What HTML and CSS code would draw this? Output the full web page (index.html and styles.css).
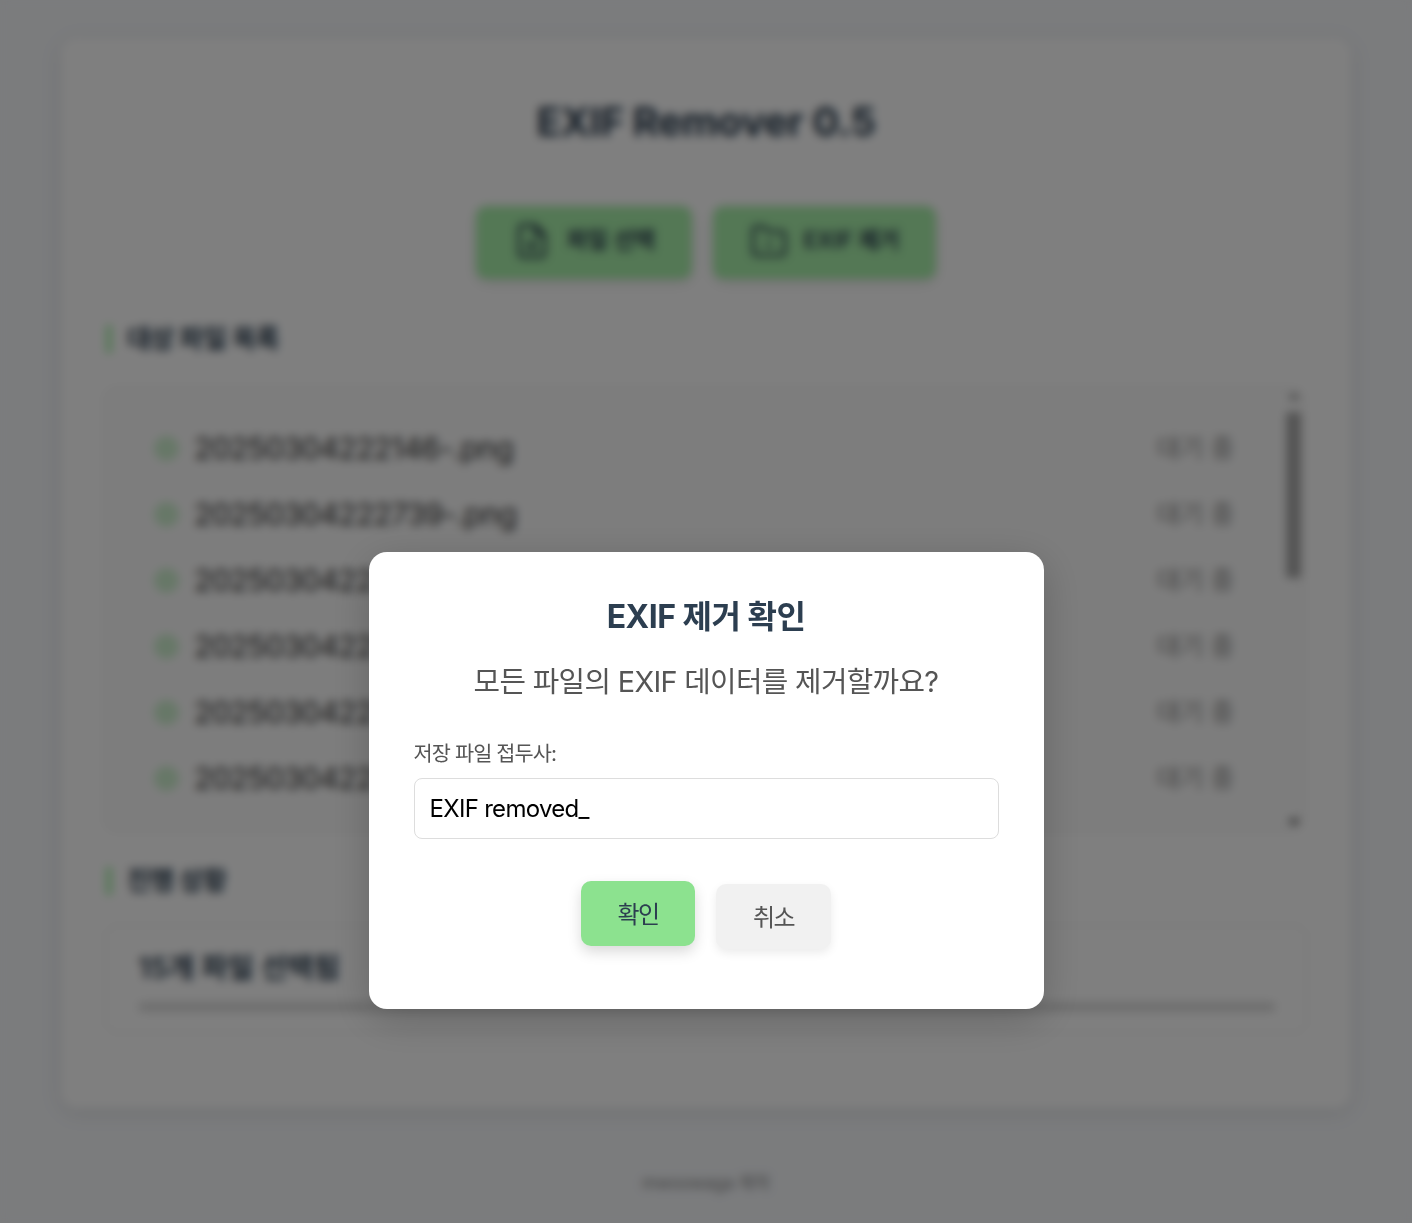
FILE: index.html
```html
<!DOCTYPE html>
<html lang="ko">
<head>
    <meta charset="UTF-8">
    <meta name="viewport" content="width=device-width, initial-scale=1.0">
    <title>EXIF Remover 0.5</title>
    <link rel="stylesheet" href="styles.css">
</head>
<body>
    <div class="container">
        <h1>EXIF Remover 0.5</h1>

        <div class="actions">
            <button class="btn-main btn-file">
                <svg class="btn-icon" viewBox="0 0 24 24" fill="none" stroke="currentColor" stroke-width="2" stroke-linecap="round" stroke-linejoin="round">
                    <path d="M14 2H6a2 2 0 0 0-2 2v16a2 2 0 0 0 2 2h12a2 2 0 0 0 2-2V8z"/>
                    <path d="M14 2v6h6"/>
                    <path d="M12 18v-6M9 15h6"/>
                </svg>
                <span class="btn-label">파일 선택</span>
            </button>
            <button class="btn-main btn-run">
                <svg class="btn-icon" viewBox="0 0 24 24" fill="none" stroke="currentColor" stroke-width="2" stroke-linecap="round" stroke-linejoin="round">
                    <path d="M22 19a2 2 0 0 1-2 2H4a2 2 0 0 1-2-2V5a2 2 0 0 1 2-2h5l2 3h9a2 2 0 0 1 2 2z"/>
                    <path d="M12 12v4M10 14h4" stroke-width="1.2"/>
                </svg>
                <span class="btn-label">EXIF 제거</span>
            </button>
        </div>

        <h2 class="section-title">대상 파일 목록</h2>
        <div class="file-box">
            <ul class="file-list">
                <li class="file-item"><span class="dot"></span><span class="file-name">20250304222146-.png</span><span class="file-state">대기 중</span></li>
                <li class="file-item"><span class="dot"></span><span class="file-name">20250304222739-.png</span><span class="file-state">대기 중</span></li>
                <li class="file-item"><span class="dot"></span><span class="file-name">20250304223012-.png</span><span class="file-state">대기 중</span></li>
                <li class="file-item"><span class="dot"></span><span class="file-name">20250304223145-.png</span><span class="file-state">대기 중</span></li>
                <li class="file-item"><span class="dot"></span><span class="file-name">20250304223308-.png</span><span class="file-state">대기 중</span></li>
                <li class="file-item"><span class="dot"></span><span class="file-name">20250304223420-.png</span><span class="file-state">대기 중</span></li>
            </ul>
            <div class="scroll-rail">
                <span class="arrow arrow-up"></span>
                <span class="thumb-track"><span class="thumb"></span></span>
                <span class="arrow arrow-down"></span>
            </div>
        </div>

        <h2 class="section-title section-progress">진행 상황</h2>
        <div class="progress-box">
            <div class="progress-text">15개 파일 선택됨</div>
            <div class="progress-bar"></div>
        </div>
    </div>

    <footer class="footer">mwoowaga 제작</footer>

    <div class="overlay">
        <div class="modal">
            <h3 class="modal-title">EXIF 제거 확인</h3>
            <p class="modal-text">모든 파일의 EXIF 데이터를 제거할까요?</p>
            <label class="modal-label" for="prefix">저장 파일 접두사:</label>
            <input class="modal-input" type="text" id="prefix" value="EXIF removed_">
            <div class="modal-buttons">
                <button class="btn-confirm">확인</button>
                <button class="btn-cancel">취소</button>
            </div>
        </div>
    </div>
</body>
</html>
```

FILE: styles.css
```css
* {
    box-sizing: border-box;
}
html, body {
    height: 1223px;
    overflow: hidden;
}
body {
    font-family: Inter, "Noto Sans CJK KR", sans-serif;
    margin: 0;
    padding: 38px 61px 0;
    background: #f6f8fb;
    color: #333;
}
.container {
    height: 1070px;
    padding: 59px 44px 0;
    background: #fff;
    border-radius: 16px;
    box-shadow: 0 4px 20px rgba(0, 0, 0, 0.1);
}
h1 {
    margin: 0;
    height: 50px;
    line-height: 50px;
    text-align: center;
    font-size: 40px;
    font-weight: 700;
    letter-spacing: -0.4px;
    color: #2c3e50;
}
.actions {
    display: flex;
    justify-content: center;
    gap: 21px;
    margin-top: 59px;
}
.btn-main {
    display: flex;
    align-items: center;
    justify-content: center;
    gap: 16px;
    height: 73px;
    border: none;
    border-radius: 10px;
    background: #a8f0aa;
    color: #2c3e50;
    font-family: inherit;
    font-size: 22.4px;
    font-weight: 600;
    box-shadow: 0 4px 12px rgba(0, 0, 0, 0.1);
}
.btn-label {
    margin-bottom: 10px;
}
.btn-file {
    width: 216px;
}
.btn-run {
    width: 223px;
}
.btn-icon {
    width: 38px;
    height: 38px;
    margin-bottom: 4px;
}
.section-title {
    margin: 46px 0 0 1px;
    height: 28px;
    line-height: 28px;
    padding-left: 15px;
    border-left: 6px solid #a8f0aa;
    font-size: 26px;
    font-weight: 600;
    letter-spacing: -0.6px;
    color: #2c3e50;
}
.file-box {
    display: flex;
    height: 443px;
    margin-top: 35px;
    margin-right: 3px;
    background: #fbfbfb;
    border: 1px solid #ddd;
    border-radius: 10px;
}
.file-list {
    flex: 1;
    margin: 0;
    padding: 26px 51px 0 48px;
    list-style: none;
    overflow: hidden;
}
.file-item {
    display: flex;
    align-items: center;
    height: 66px;
}
.dot {
    width: 25px;
    height: 25px;
    border-radius: 50%;
    background: #8ce28f;
    opacity: 0.4;
}
.file-name {
    flex: 1;
    margin-left: 15px;
    font-size: 30px;
    letter-spacing: -0.65px;
    color: #333;
}
.file-state {
    padding-bottom: 4px;
    font-size: 25.4px;
    color: #888;
}
.scroll-rail {
    display: flex;
    flex-direction: column;
    align-items: center;
    width: 17px;
    margin-right: 1px;
    padding: 4px 0;
}
.arrow {
    width: 0;
    height: 0;
    border-left: 6px solid transparent;
    border-right: 6px solid transparent;
}
.arrow-up {
    border-bottom: 6px solid #777;
}
.arrow-down {
    border-top: 7px solid #505050;
}
.thumb-track {
    flex: 1;
    width: 100%;
    padding: 13px 1px 0;
}
.thumb {
    display: block;
    width: 15px;
    height: 166px;
    margin: 0 auto;
    background: #a8a8a8;
    border-radius: 2px;
}
.section-progress {
    margin-top: 36px;
}
.progress-box {
    height: 108px;
    margin-top: 30px;
    padding: 19px 30px 0 32px;
    border: 1px solid #e4e4e4;
    border-radius: 10px;
}
.progress-text {
    font-size: 28.5px;
    font-weight: 600;
    color: #2c3e50;
}
.progress-bar {
    height: 10px;
    margin-top: 16px;
    background: #ddd;
    border-radius: 5px;
}
.footer {
    margin-top: 61px;
    text-align: center;
    font-size: 17px;
    color: #888;
}
.overlay {
    position: fixed;
    inset: 0;
    display: flex;
    align-items: flex-start;
    justify-content: center;
    padding-top: 552px;
    background: rgba(0, 0, 0, 0.5);
    backdrop-filter: blur(5px);
}
.modal {
    width: 675px;
    height: 457px;
    padding: 45px;
    background: #fff;
    border-radius: 18px;
    box-shadow: 0 10px 40px rgba(0, 0, 0, 0.2);
}
.modal-title {
    margin: 1px 0 0;
    height: 38px;
    line-height: 38px;
    text-align: center;
    font-size: 32px;
    font-weight: 700;
    letter-spacing: -0.5px;
    color: #2c3e50;
}
.modal-text {
    margin: 26px 0 0;
    height: 40px;
    line-height: 40px;
    text-align: center;
    font-size: 28.8px;
    letter-spacing: -0.65px;
    color: #555;
}
.modal-label {
    display: block;
    margin-top: 37px;
    height: 30px;
    line-height: 30px;
    font-size: 20.8px;
    letter-spacing: -0.9px;
    color: #555;
}
.modal-input {
    display: block;
    width: 100%;
    height: 61px;
    margin-top: 9px;
    padding: 0 15px;
    border: 1px solid #ddd;
    border-radius: 8px;
    background: #fff;
    font-family: inherit;
    font-size: 24px;
    letter-spacing: -0.7px;
    color: #000;
}
.modal-buttons {
    display: flex;
    justify-content: center;
    align-items: flex-start;
    gap: 21px;
    margin-top: 42px;
}
.btn-confirm, .btn-cancel {
    width: 115px;
    height: 65px;
    border: none;
    border-radius: 10px;
    font-family: inherit;
    font-size: 24px;
    letter-spacing: -1.5px;
}
.btn-confirm {
    width: 114px;
    padding-bottom: 4px;
    background: #8ce28f;
    color: #2c3e50;
    box-shadow: 0 6px 14px rgba(0, 0, 0, 0.15);
}
.btn-cancel {
    margin-top: 3px;
    padding-bottom: 4px;
    background: #f1f1f1;
    color: #555;
    box-shadow: 0 4px 10px rgba(0, 0, 0, 0.08);
}
```
